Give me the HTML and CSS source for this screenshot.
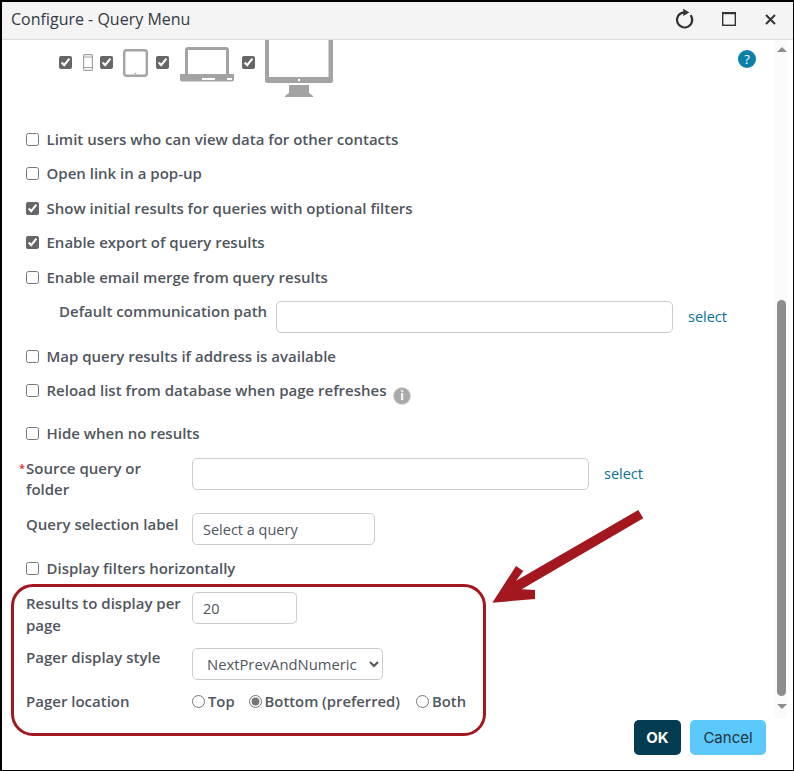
FILE: index.html
```html
<!DOCTYPE html>
<html lang="en">
<head>
<meta charset="utf-8">
<title>Configure - Query Menu</title>
<link rel="stylesheet" href="styles.css">
</head>
<body>
<div class="window">
  <header class="titlebar">
    <h1 class="title">Configure - Query Menu</h1>
    <div class="win-tools">
      <svg class="tool" width="20" height="22" viewBox="0 0 20 22"><path d="M15.6 7.2A7.600 7.600 0 1 1 8.800 4.300" fill="none" stroke="#333" stroke-width="2.200"/><path d="M8.200 .8 14.400 4.500 8.200 8Z" fill="#333"/></svg>
      <svg class="tool" width="14" height="14" viewBox="0 0 14 14"><rect x=".7" y=".7" width="12.600" height="12.600" fill="none" stroke="#333" stroke-width="1.400"/><rect x="0" y="0" width="14" height="2.200" fill="#333"/></svg>
      <svg class="tool" width="11" height="11" viewBox="0 0 11 11"><path d="M1 1 10 10M10 1 1 10" stroke="#333" stroke-width="2"/></svg>
    </div>
  </header>
  <div class="body">
    <main class="form">
      <div class="devices">
        <input type="checkbox" class="cb" checked>
        <svg class="dev-phone" width="10" height="17" viewBox="0 0 10 17"><rect x="0.6" y="0.6" width="8.800" height="15.800" rx="1.200" fill="#fff" stroke="#a3a3a3" stroke-width="1.200"/><path d="M1 3H9M1 13.500H9" stroke="#a3a3a3"/></svg>
        <input type="checkbox" class="cb" checked>
        <svg class="dev-tablet" width="25" height="28" viewBox="0 0 25 28"><rect x="1.200" y="1.200" width="22.600" height="25.600" rx="2.500" fill="#fff" stroke="#a3a3a3" stroke-width="2.400"/><circle cx="12.500" cy="24.600" r=".9" fill="#a3a3a3"/></svg>
        <input type="checkbox" class="cb" checked>
        <svg class="dev-laptop" width="54" height="35" viewBox="0 0 54 35"><path d="M6.500 28V3A1.500 1.500 0 0 1 8 1.500h38A1.500 1.500 0 0 1 47.500 3v25" fill="#fff" stroke="#a3a3a3" stroke-width="3"/><path d="M0 27h54v5.500a2 2 0 0 1-2 2H2a2 2 0 0 1-2-2Z" fill="#a3a3a3"/><rect x="22" y="31" width="13" height="2" fill="#fff"/><rect x="47" y="31" width="5" height="2" fill="#fff"/></svg>
        <input type="checkbox" class="cb" checked>
        <svg class="dev-monitor" width="68" height="57" viewBox="0 0 68 57"><path d="M0 0h68v40.500a2.500 2.500 0 0 1-2.500 2.500H2.500A2.500 2.500 0 0 1 0 40.500Z" fill="#a3a3a3"/><rect x="4" y="0" width="59.500" height="37" fill="#fff"/><circle cx="34" cy="40" r="1.200" fill="#fff"/><path d="M24 45h20v8l4 3v1H20v-1l4-3Z" fill="#a3a3a3"/></svg>
        <span class="help">?</span>
      </div>

      <label class="check-row first"><input type="checkbox" class="cb"><span>Limit users who can view data for other contacts</span></label>
      <label class="check-row"><input type="checkbox" class="cb"><span>Open link in a pop-up</span></label>
      <label class="check-row"><input type="checkbox" class="cb" checked><span>Show initial results for queries with optional filters</span></label>
      <label class="check-row"><input type="checkbox" class="cb" checked><span>Enable export of query results</span></label>
      <label class="check-row tight"><input type="checkbox" class="cb"><span>Enable email merge from query results</span></label>

      <div class="path-row">
        <span class="lbl">Default communication path</span>
        <input type="text" class="text path-input">
        <a class="link" href="#">select</a>
      </div>

      <label class="check-row"><input type="checkbox" class="cb"><span>Map query results if address is available</span></label>
      <label class="check-row reload"><input type="checkbox" class="cb"><span>Reload list from database when page refreshes</span><span class="info">i</span></label>
      <label class="check-row hide-row"><input type="checkbox" class="cb"><span>Hide when no results</span></label>

      <div class="field source">
        <span class="lbl name req">Source query or folder</span>
        <input type="text" class="text source-input">
        <a class="link" href="#">select</a>
      </div>
      <div class="field qlabel">
        <span class="lbl name">Query selection label</span>
        <input type="text" class="text label-input" value="Select a query">
      </div>
      <label class="check-row filters"><input type="checkbox" class="cb"><span>Display filters horizontally</span></label>

      <div class="field results">
        <span class="lbl name">Results to display per page</span>
        <input type="text" class="text num-input" value="20">
      </div>
      <div class="field pager">
        <span class="lbl name">Pager display style</span>
        <select class="text pager-select"><option>NextPrevAndNumeric</option></select>
      </div>
      <div class="field location">
        <span class="lbl name">Pager location</span>
        <label class="radio radio-top"><input type="radio" name="loc"><span>Top</span></label>
        <label class="radio"><input type="radio" name="loc" checked><span>Bottom (preferred)</span></label>
        <label class="radio"><input type="radio" name="loc"><span>Both</span></label>
      </div>
    </main>
    <div class="scrollbar">
      <span class="arrow-up"></span>
      <div class="track"><div class="thumb"></div></div>
      <span class="arrow-down"></span>
    </div>
  </div>
  <footer class="footer">
    <button class="btn ok">OK</button>
    <button class="btn cancel">Cancel</button>
  </footer>
  <div class="callout"></div>
  <svg class="pointer" width="156" height="96" viewBox="0 0 156 96"><path d="M149.300 2 154.300 10.300 32.700 81.300 46 82 46 91 3.300 94.700 27 58 34.300 63 27 72.700Z" fill="#a3171f"/></svg>
</div>
</body>
</html>
```

FILE: styles.css
```css
* { box-sizing: border-box; }
html, body { margin: 0; height: 100%; }
body { font-family: "Open Sans", sans-serif; color: #50565e; background: #fff; overflow: hidden; }

.window {
  position: relative;
  width: 794px;
  height: 771px;
  border: 2px solid #000;
  border-right-width: 1px;
  border-bottom-width: 1px;
  display: flex;
  flex-direction: column;
  background: #fff;
}

.titlebar {
  flex: none;
  height: 38px;
  background: #f4f4f4;
  border-bottom: 1px solid #dcdcdc;
  display: flex;
  align-items: center;
  justify-content: space-between;
  padding: 0 17px 3px 9px;
}
.title { margin: 0; font-size: 16px; font-weight: 400; color: #333a44; }
.win-tools { display: flex; align-items: center; }
.tool { display: block; }
.win-tools .tool:nth-child(2) { margin-left: 27px; }
.win-tools .tool:nth-child(3) { margin-left: 29px; }

.body { flex: 1; min-height: 0; display: flex; }
.form { flex: 1; min-width: 0; overflow: hidden; padding-left: 24px; }

.cb {
  margin: 0;
  width: 13px;
  height: 13px;
  flex: none;
  accent-color: #666;
}

.devices {
  position: relative;
  height: 57px;
  padding-left: 33px;
  display: flex;
  align-items: flex-start;
}
.devices .cb { margin-top: 16px; }
.dev-phone { margin: 14px 7px 0 11px; }
.dev-tablet { margin: 9px 8px 0 10px; }
.dev-laptop { margin: 7px 8px 0 11px; }
.dev-monitor { margin: 0 0 0 10px; }
.help {
  position: absolute;
  left: 712px;
  top: 10px;
  width: 18px;
  height: 18px;
  border-radius: 50%;
  background: #0a7fa8;
  color: #fff;
  font-size: 13px;
  line-height: 18px;
  text-align: center;
}

.lbl, .check-row, .radio { font-size: 15px; font-weight: 600; line-height: 21px; }
.check-row { display: flex; align-items: center; gap: 7.5px; height: 21px; margin-bottom: 13.5px; }
.check-row.first { margin-top: 31.6px; }
.check-row.tight { margin-bottom: 13px; }
.check-row.reload { margin-bottom: 22px; }
.check-row.hide-row { margin-bottom: 14px; }
.check-row.filters { margin-bottom: 13px; }

.info {
  width: 16px;
  height: 16px;
  margin: 11px 0 0 0;
  border-radius: 50%;
  background: #a9a9a9;
  box-shadow: 0 0 0 1px #d4d4d4;
  color: #fff;
  font-size: 12px;
  font-weight: 700;
  line-height: 16px;
  text-align: center;
}

.text {
  height: 32px;
  border: 1px solid #ccc;
  border-radius: 5px;
  background: #fff;
  font-family: inherit;
  font-size: 14.5px;
  color: #50565e;
  padding: 0 10px;
  outline: none;
}
.link { color: #0a6f96; font-size: 14.5px; text-decoration: none; }

.path-row { display: flex; align-items: flex-start; margin-left: 33px; height: 34px; margin-bottom: 11px; }
.path-row .lbl { width: 217px; }
.path-input { width: 397px; }
.path-row .link { margin: 6px 0 0 15px; }

.field { display: flex; align-items: flex-start; }
.name { width: 166px; flex: none; padding-right: 8px; }
.req { position: relative; }
.req::before {
  content: "*";
  position: absolute;
  left: -7px;
  top: -1px;
  color: #ee1c25;
  font-size: 11px;
}
.source { height: 44px; margin-bottom: 11px; }
.source-input { width: 397px; }
.source .link { margin: 6px 0 0 15px; }
.qlabel { height: 32px; margin-bottom: 13px; }
.qlabel .name { padding-top: 1px; }
.label-input { width: 183px; }
.results { height: 44px; margin-bottom: 12px; }
.results .name { line-height: 22px; }
.num-input { width: 105px; }
.pager { height: 33px; margin-bottom: 10px; }
.pager .name { margin-top: -1px; }
.pager-select { width: 191px; font-size: 14.8px; padding: 0 0 0 10px; }
.location { align-items: center; height: 21px; }
.radio { display: flex; align-items: center; gap: 3px; margin-right: 16px; font-size: 14.8px; }
.radio-top { margin-right: 14px; }
.radio input { margin: 0; width: 13px; height: 13px; accent-color: #767676; }

.scrollbar {
  flex: none;
  width: 13px;
  height: 100%;
  margin-right: 6px;
  padding-left: 2px;
  background: #fafafa;
  display: flex;
  flex-direction: column;
  align-items: center;
}
.arrow-up, .arrow-down { flex: none; width: 0; height: 0; border-left: 5px solid transparent; border-right: 5px solid transparent; }
.arrow-up { border-bottom: 5px solid #8d8d8d; margin: 7px 0 5px; }
.arrow-down { border-top: 5px solid #8d8d8d; margin: 8px 0 9px; }
.track { flex: 1; width: 9px; display: flex; flex-direction: column; justify-content: flex-end; }
.thumb { height: 396px; background: #8d8d8d; border-radius: 5px; }

.footer {
  flex: none;
  height: 52px;
  display: flex;
  justify-content: flex-end;
  align-items: flex-start;
  gap: 9px;
  padding: 2px 27px 0 0;
}
.btn {
  height: 35px;
  border: 0;
  border-radius: 5px;
  font-family: Inter, sans-serif;
  font-size: 15px;
}
.ok { width: 47px; background: #033c50; color: #fff; font-weight: 700; }
.cancel { width: 76px; background: #5bc9fb; color: #24323c; font-weight: 400; }

.callout {
  position: absolute;
  left: 9px;
  top: 582px;
  width: 475px;
  height: 152px;
  border: 3px solid #a3171f;
  border-radius: 22px;
  pointer-events: none;
}
.pointer { position: absolute; left: 487px; top: 506px; pointer-events: none; }
```
